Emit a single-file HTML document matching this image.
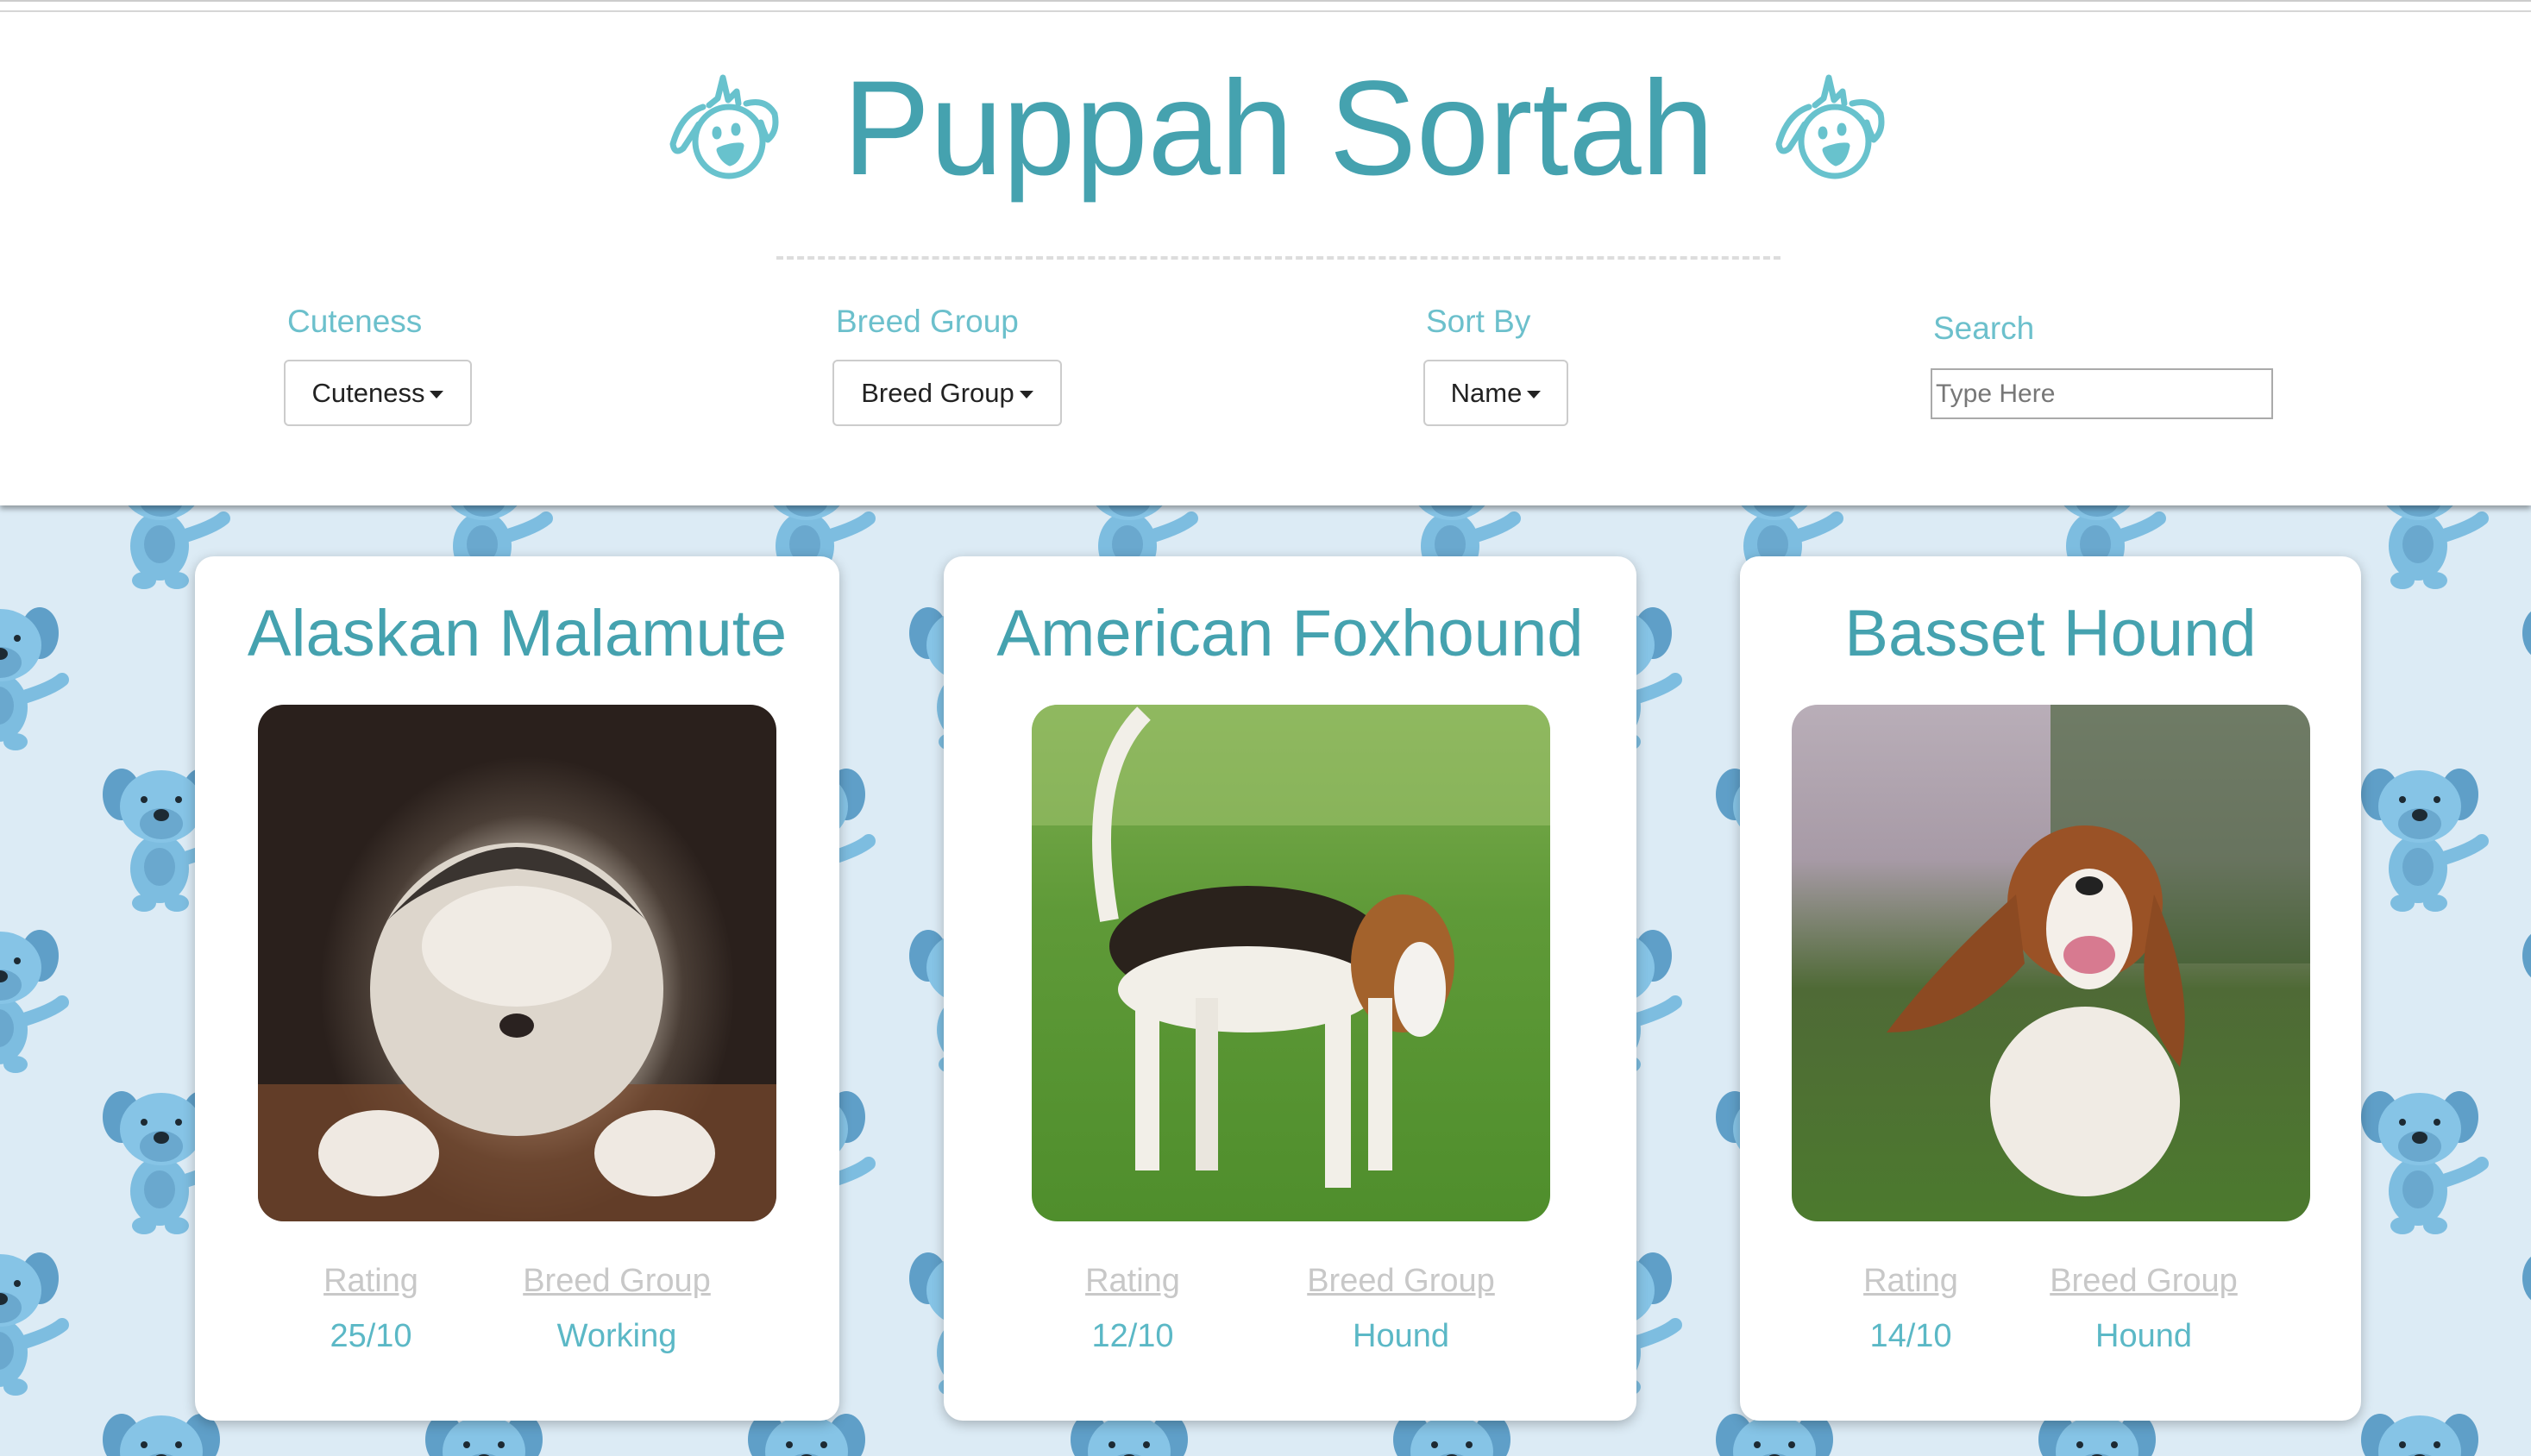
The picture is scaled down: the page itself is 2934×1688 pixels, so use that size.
<!DOCTYPE html>
<html><head><meta charset="utf-8"><style>
html,body{margin:0;padding:0;width:2934px;height:1688px;overflow:hidden;background:#dcebf5;font-family:"Liberation Sans","DejaVu Sans",sans-serif;position:relative}
.abs{position:absolute}
#bg{position:absolute;left:0;top:0}
#header{position:absolute;left:0;top:0;width:2934px;height:586px;background:#fff;box-shadow:0 4px 6px rgba(0,0,0,.35);border-top:2px solid #ccc;box-sizing:border-box}
#topline{position:absolute;left:0;top:10px;width:2934px;height:2px;background:#d6d6d6}
.title{position:absolute;left:782px;top:52px;width:1400px;text-align:center;font-size:156px;color:#45a2af;font-weight:normal;line-height:190px;white-space:nowrap;transform:scaleX(0.97);transform-origin:center}
.dash{position:absolute;left:900px;top:295px;width:1164px;border-top:4px dashed #ddd}
.lbl{position:absolute;font-size:37px;color:#6cc0cc}
.btn{position:absolute;height:77px;border:2px solid #ccc;border-radius:6px;box-sizing:border-box;background:#fff;font-size:31px;color:#222;line-height:73px;text-align:center}
.caret{display:inline-block;width:0;height:0;border-left:8px solid transparent;border-right:8px solid transparent;border-top:9px solid #222;vertical-align:middle;margin-left:6px}
.inp{position:absolute;left:2238px;top:425px;width:397px;height:59px;border:2px solid #aaa;box-sizing:border-box;font-size:30px;color:#777;line-height:55px;padding-left:4px}
.card{position:absolute;top:645px;height:1002px;background:#fff;border-radius:22px;box-shadow:0 4px 14px rgba(0,0,0,.25)}
.ct{position:absolute;left:0;right:0;top:40px;text-align:center;font-size:76px;color:#45a2af;line-height:100px}
.img{position:absolute;top:172px;width:601px;height:599px;border-radius:30px;overflow:hidden}
.sl{position:absolute;top:819px;font-size:38px;color:#c8c8c8;text-decoration:underline;transform:translateX(-50%);white-space:nowrap}
.sv{position:absolute;top:883px;font-size:38px;color:#5bb8c6;transform:translateX(-50%);white-space:nowrap}
</style></head><body>
<svg id="bg" width="2934" height="1688">
<defs>
<g id="pup">
<ellipse cx="-2" cy="72" rx="34" ry="40" fill="#7dbde0"/>
<path d="M28 60 Q60 50 72 40" stroke="#7dbde0" stroke-width="16" fill="none" stroke-linecap="round"/>
<ellipse cx="-2" cy="70" rx="18" ry="22" fill="#6aa8ce"/>
<ellipse cx="-20" cy="112" rx="14" ry="10" fill="#7dbde0"/><ellipse cx="18" cy="112" rx="14" ry="10" fill="#7dbde0"/>
<ellipse cx="-46" cy="-14" rx="22" ry="30" fill="#5f9fc8"/>
<ellipse cx="46" cy="-14" rx="22" ry="30" fill="#5f9fc8"/>
<ellipse cx="0" cy="0" rx="48" ry="42" fill="#86c4e6"/>
<ellipse cx="0" cy="20" rx="25" ry="18" fill="#6aa8ce"/>
<ellipse cx="0" cy="10" rx="9" ry="7" fill="#1d2a33"/>
<circle cx="-20" cy="-8" r="4" fill="#1d2a33"/><circle cx="20" cy="-8" r="4" fill="#1d2a33"/>
</g>
<pattern id="pp" x="0" y="0" width="374" height="374" patternUnits="userSpaceOnUse">
<use href="#pup" x="187" y="187"/>
<use href="#pup" x="0" y="0"/><use href="#pup" x="374" y="0"/>
<use href="#pup" x="0" y="374"/><use href="#pup" x="374" y="374"/>
<use href="#pup" x="187" y="-187"/><use href="#pup" x="-187" y="187"/><use href="#pup" x="561" y="187"/>
</pattern>
<g id="icon" fill="none" stroke="#68c2cd" stroke-width="7" stroke-linecap="round" stroke-linejoin="round">
<ellipse cx="85" cy="92" rx="39" ry="40"/>
<path d="M55 52 Q30 60 20 95 Q22 108 32 100 Q42 85 50 72"/>
<path d="M105 48 Q128 42 138 60 Q142 80 130 90 Q125 80 122 70"/>
<path d="M62 50 L72 42 L78 18 L84 44 L94 34 L96 48"/>
<ellipse cx="71" cy="82" rx="2" ry="4" fill="#68c2cd"/>
<ellipse cx="93" cy="78" rx="2" ry="4" fill="#68c2cd"/>
<path d="M74 102 Q88 96 99 97 Q96 114 86 117 Q77 112 74 102 Z" fill="#68c2cd"/>
</g>
</defs>
<rect x="0" y="586" width="2934" height="1102" fill="url(#pp)"/>
</svg>
<div id="header">
<div id="topline"></div>
<svg class="abs" style="left:760px;top:70px" width="160" height="150"><use href="#icon"/></svg>
<svg class="abs" style="left:2042px;top:70px" width="160" height="150"><use href="#icon"/></svg>
<div class="title">Puppah Sortah</div>
<div class="dash"></div>
<div class="lbl" style="left:333px;top:350px">Cuteness</div>
<div class="lbl" style="left:969px;top:350px">Breed Group</div>
<div class="lbl" style="left:1653px;top:350px">Sort By</div>
<div class="lbl" style="left:2241px;top:358px">Search</div>
<div class="btn" style="left:329px;top:415px;width:218px">Cuteness<span class="caret"></span></div>
<div class="btn" style="left:965px;top:415px;width:266px">Breed Group<span class="caret"></span></div>
<div class="btn" style="left:1650px;top:415px;width:168px">Name<span class="caret"></span></div>
<div class="inp">Type Here</div>
</div>

<div class="card" style="left:226px;width:747px">
<div class="ct">Alaskan Malamute</div>
<div class="img" style="left:73px;background:radial-gradient(ellipse 40% 45% at 52% 55%,#e8e2d8 0,#c9bfb2 45%,#4a3e36 75%,#2a201c 100%)">
<svg width="601" height="599"><rect x="0" y="440" width="601" height="159" fill="#7a4a2e" opacity=".7"/><ellipse cx="300" cy="330" rx="170" ry="170" fill="#ddd6cc"/><path d="M150 250 Q300 80 450 250 Q400 200 300 190 Q200 200 150 250Z" fill="#3a3430"/><ellipse cx="300" cy="280" rx="110" ry="70" fill="#f0ebe4"/><ellipse cx="300" cy="372" rx="20" ry="14" fill="#2a2220"/><ellipse cx="140" cy="520" rx="70" ry="50" fill="#efe9e2"/><ellipse cx="460" cy="520" rx="70" ry="50" fill="#efe9e2"/></svg>
</div>
<div class="sl" style="left:204px">Rating</div><div class="sl" style="left:489px">Breed Group</div>
<div class="sv" style="left:204px">25/10</div><div class="sv" style="left:489px">Working</div>
</div>

<div class="card" style="left:1094px;width:803px">
<div class="ct">American Foxhound</div>
<div class="img" style="left:102px;background:linear-gradient(#7fae50 0,#5f9a38 40%,#4f8e2c 100%)">
<svg width="601" height="599"><rect width="601" height="140" fill="#9bc06a" opacity=".6"/><ellipse cx="250" cy="280" rx="160" ry="70" fill="#2a221c"/><ellipse cx="250" cy="330" rx="150" ry="50" fill="#f2efe8"/><path d="M90 250 Q60 80 130 10" stroke="#f2efe8" stroke-width="22" fill="none"/><ellipse cx="430" cy="300" rx="60" ry="80" fill="#a3622c"/><ellipse cx="450" cy="330" rx="30" ry="55" fill="#f4f2ee"/><rect x="120" y="330" width="28" height="210" fill="#f2efe8"/><rect x="340" y="340" width="30" height="220" fill="#f2efe8"/><rect x="390" y="340" width="28" height="200" fill="#f2efe8"/><rect x="190" y="340" width="26" height="200" fill="#eae6de"/></svg>
</div>
<div class="sl" style="left:219px">Rating</div><div class="sl" style="left:530px">Breed Group</div>
<div class="sv" style="left:219px">12/10</div><div class="sv" style="left:530px">Hound</div>
</div>

<div class="card" style="left:2017px;width:720px">
<div class="ct">Basset Hound</div>
<div class="img" style="left:60px;background:linear-gradient(#b9aeb8 0,#a79aa6 30%,#4f6a36 55%,#4c7a2e 100%)">
<svg width="601" height="599"><rect x="300" y="0" width="301" height="300" fill="#3e5a2e" opacity=".6"/><ellipse cx="340" cy="460" rx="110" ry="110" fill="#f0ebe4"/><ellipse cx="340" cy="230" rx="90" ry="90" fill="#9a5226"/><ellipse cx="345" cy="260" rx="50" ry="70" fill="#f4efe9"/><path d="M260 220 Q170 300 110 380 Q200 380 270 300Z" fill="#8c4a22"/><path d="M420 220 Q470 330 450 420 Q400 360 410 280Z" fill="#8c4a22"/><ellipse cx="345" cy="290" rx="30" ry="22" fill="#d77a90"/><ellipse cx="345" cy="210" rx="16" ry="11" fill="#222"/></svg>
</div>
<div class="sl" style="left:198px">Rating</div><div class="sl" style="left:468px">Breed Group</div>
<div class="sv" style="left:198px">14/10</div><div class="sv" style="left:468px">Hound</div>
</div>
</body></html>
